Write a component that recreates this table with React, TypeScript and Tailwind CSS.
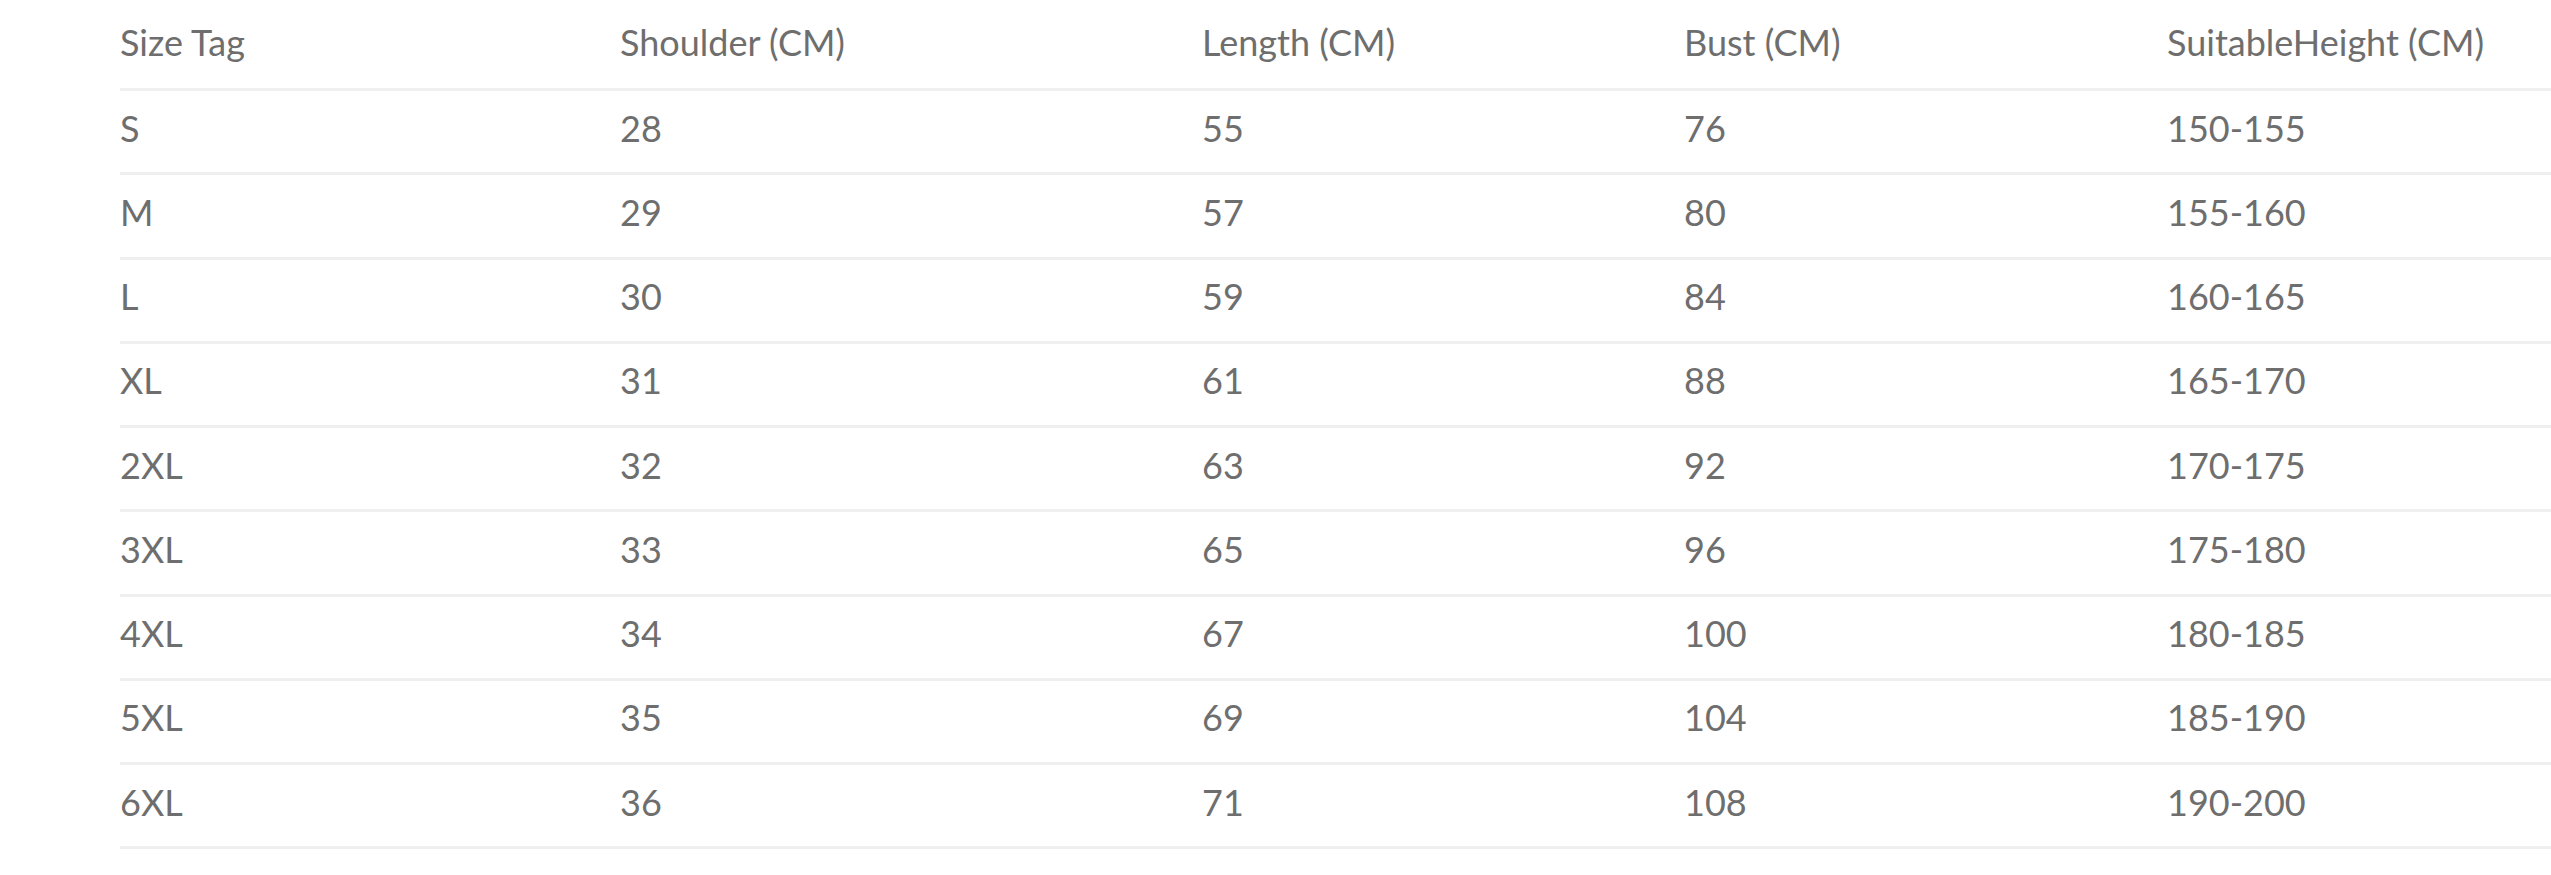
import React from 'react';

const headers = ['Size Tag', 'Shoulder (CM)', 'Length (CM)', 'Bust (CM)', 'SuitableHeight (CM)'];

const rows = [
  ['S', '28', '55', '76', '150-155'],
  ['M', '29', '57', '80', '155-160'],
  ['L', '30', '59', '84', '160-165'],
  ['XL', '31', '61', '88', '165-170'],
  ['2XL', '32', '63', '92', '170-175'],
  ['3XL', '33', '65', '96', '175-180'],
  ['4XL', '34', '67', '100', '180-185'],
  ['5XL', '35', '69', '104', '185-190'],
  ['6XL', '36', '71', '108', '190-200'],
];

// column widths taken from the reference; last column fills the rest
const Cells = ({ cells }: { cells: string[] }) => (
  <>
    <div className="w-[500px] shrink-0">{cells[0]}</div>
    <div className="w-[582px] shrink-0">{cells[1]}</div>
    <div className="w-[482px] shrink-0">{cells[2]}</div>
    <div className="w-[483px] shrink-0">{cells[3]}</div>
    <div className="flex-1">{cells[4]}</div>
  </>
);

export default function App() {
  return (
    <div className="min-h-screen bg-white pl-[120px] text-[36px] text-[#6e6e6e] font-['Lato',_'Liberation_Sans',_sans-serif]">
      {/* Header */}
      <div className="flex h-[91px] items-center border-b-[3px] border-[#efefef] pb-[5px]">
        <Cells cells={headers} />
      </div>

      {/* Size rows */}
      {rows.map((row) => (
        <div key={row[0]} className="flex h-[84.25px] items-center border-b-[3px] border-[#efefef] pb-[8px]">
          <Cells cells={row} />
        </div>
      ))}
    </div>
  );
}
